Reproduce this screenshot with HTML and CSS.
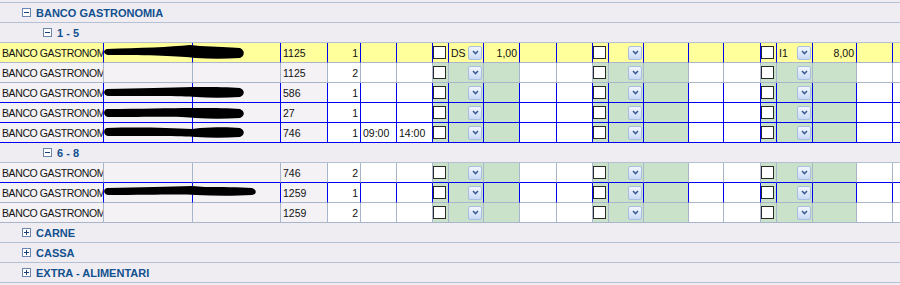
FILE: index.html
```html
<!DOCTYPE html>
<html lang="it">
<head>
    <meta charset="UTF-8">
    <title>Banco gastronomia</title>
    <link rel="stylesheet" href="styles.css">
</head>
<body>

<div class="grid">

    <div class="group lvl1">
        <svg class="tog" width="9" height="9" viewBox="0 0 9 9"><rect x="0.5" y="0.5" width="8" height="8"/><path d="M2 4.5h5"/></svg>
        <span>BANCO GASTRONOMIA</span>
    </div>
    <div class="group lvl2">
        <svg class="tog" width="9" height="9" viewBox="0 0 9 9"><rect x="0.5" y="0.5" width="8" height="8"/><path d="M2 4.5h5"/></svg>
        <span>1 - 5</span>
    </div>

    <!-- riga selezionata -->
    <div class="row current sel-v">
        <div class="c sh name">BANCO GASTRONOMIA</div>
        <div class="c sh"></div>
        <div class="c sh"></div>
        <div class="c sh">1125</div>
        <div class="c num">1</div>
        <div class="c"></div>
        <div class="c"></div>
        <div class="c g"><span class="chk"></span></div>
        <div class="c g sel"><span>DS</span><span class="dd"><svg width="7" height="5" viewBox="0 0 7 5"><path d="M1 1l2.5 2.5L6 1"/></svg></span></div>
        <div class="c g num">1,00</div>
        <div class="c"></div>
        <div class="c"></div>
        <div class="c g"><span class="chk"></span></div>
        <div class="c g sel"><span></span><span class="dd"><svg width="7" height="5" viewBox="0 0 7 5"><path d="M1 1l2.5 2.5L6 1"/></svg></span></div>
        <div class="c g"></div>
        <div class="c"></div>
        <div class="c"></div>
        <div class="c g"><span class="chk"></span></div>
        <div class="c g sel"><span>I1</span><span class="dd"><svg width="7" height="5" viewBox="0 0 7 5"><path d="M1 1l2.5 2.5L6 1"/></svg></span></div>
        <div class="c g num">8,00</div>
        <div class="c"></div>
        <div class="c"></div>
        <svg class="blot" width="300" height="19" viewBox="0 0 300 19"><path d="M107 6C140 5 170 4 190 2L200 3C215 4 230 4 240 5C245 7 245 13 240 15C225 16 210 16 196 15C180 13 150 12 108 12C103 11 103 7 107 6Z"/></svg>
    </div>

    <div class="row">
        <div class="c sh name">BANCO GASTRONOMIA</div>
        <div class="c sh"></div>
        <div class="c sh"></div>
        <div class="c sh">1125</div>
        <div class="c num">2</div>
        <div class="c"></div>
        <div class="c"></div>
        <div class="c g"><span class="chk"></span></div>
        <div class="c g sel"><span></span><span class="dd"><svg width="7" height="5" viewBox="0 0 7 5"><path d="M1 1l2.5 2.5L6 1"/></svg></span></div>
        <div class="c g"></div>
        <div class="c"></div>
        <div class="c"></div>
        <div class="c g"><span class="chk"></span></div>
        <div class="c g sel"><span></span><span class="dd"><svg width="7" height="5" viewBox="0 0 7 5"><path d="M1 1l2.5 2.5L6 1"/></svg></span></div>
        <div class="c g"></div>
        <div class="c"></div>
        <div class="c"></div>
        <div class="c g"><span class="chk"></span></div>
        <div class="c g sel"><span></span><span class="dd"><svg width="7" height="5" viewBox="0 0 7 5"><path d="M1 1l2.5 2.5L6 1"/></svg></span></div>
        <div class="c g"></div>
        <div class="c"></div>
        <div class="c"></div>
    </div>

    <div class="row sel-v sel-b">
        <div class="c sh name">BANCO GASTRONOMIA</div>
        <div class="c sh"></div>
        <div class="c sh"></div>
        <div class="c sh">586</div>
        <div class="c num">1</div>
        <div class="c"></div>
        <div class="c"></div>
        <div class="c g"><span class="chk"></span></div>
        <div class="c g sel"><span></span><span class="dd"><svg width="7" height="5" viewBox="0 0 7 5"><path d="M1 1l2.5 2.5L6 1"/></svg></span></div>
        <div class="c g"></div>
        <div class="c"></div>
        <div class="c"></div>
        <div class="c g"><span class="chk"></span></div>
        <div class="c g sel"><span></span><span class="dd"><svg width="7" height="5" viewBox="0 0 7 5"><path d="M1 1l2.5 2.5L6 1"/></svg></span></div>
        <div class="c g"></div>
        <div class="c"></div>
        <div class="c"></div>
        <div class="c g"><span class="chk"></span></div>
        <div class="c g sel"><span></span><span class="dd"><svg width="7" height="5" viewBox="0 0 7 5"><path d="M1 1l2.5 2.5L6 1"/></svg></span></div>
        <div class="c g"></div>
        <div class="c"></div>
        <div class="c"></div>
        <svg class="blot" width="300" height="19" viewBox="0 0 300 19"><path d="M107 6C140 5 170 5 192 4L200 4C215 4 230 4 240 5C245 7 245 12 240 14C225 15 210 15 196 14C180 13 150 13 108 13C103 12 103 7 107 6Z"/></svg>
    </div>

    <div class="row sel-v sel-b">
        <div class="c sh name">BANCO GASTRONOMIA</div>
        <div class="c sh"></div>
        <div class="c sh"></div>
        <div class="c sh">27</div>
        <div class="c num">1</div>
        <div class="c"></div>
        <div class="c"></div>
        <div class="c g"><span class="chk"></span></div>
        <div class="c g sel"><span></span><span class="dd"><svg width="7" height="5" viewBox="0 0 7 5"><path d="M1 1l2.5 2.5L6 1"/></svg></span></div>
        <div class="c g"></div>
        <div class="c"></div>
        <div class="c"></div>
        <div class="c g"><span class="chk"></span></div>
        <div class="c g sel"><span></span><span class="dd"><svg width="7" height="5" viewBox="0 0 7 5"><path d="M1 1l2.5 2.5L6 1"/></svg></span></div>
        <div class="c g"></div>
        <div class="c"></div>
        <div class="c"></div>
        <div class="c g"><span class="chk"></span></div>
        <div class="c g sel"><span></span><span class="dd"><svg width="7" height="5" viewBox="0 0 7 5"><path d="M1 1l2.5 2.5L6 1"/></svg></span></div>
        <div class="c g"></div>
        <div class="c"></div>
        <div class="c"></div>
        <svg class="blot" width="300" height="19" viewBox="0 0 300 19"><path d="M107 6C140 6 170 5 192 5L200 5C215 5 230 5 240 6C245 8 245 13 240 15C225 16 210 16 196 15C180 13 150 14 108 14C103 13 103 7 107 6Z"/></svg>
    </div>

    <div class="row sel-v sel-b">
        <div class="c sh name">BANCO GASTRONOMIA</div>
        <div class="c sh"></div>
        <div class="c sh"></div>
        <div class="c sh">746</div>
        <div class="c num">1</div>
        <div class="c">09:00</div>
        <div class="c">14:00</div>
        <div class="c g"><span class="chk"></span></div>
        <div class="c g sel"><span></span><span class="dd"><svg width="7" height="5" viewBox="0 0 7 5"><path d="M1 1l2.5 2.5L6 1"/></svg></span></div>
        <div class="c g"></div>
        <div class="c"></div>
        <div class="c"></div>
        <div class="c g"><span class="chk"></span></div>
        <div class="c g sel"><span></span><span class="dd"><svg width="7" height="5" viewBox="0 0 7 5"><path d="M1 1l2.5 2.5L6 1"/></svg></span></div>
        <div class="c g"></div>
        <div class="c"></div>
        <div class="c"></div>
        <div class="c g"><span class="chk"></span></div>
        <div class="c g sel"><span></span><span class="dd"><svg width="7" height="5" viewBox="0 0 7 5"><path d="M1 1l2.5 2.5L6 1"/></svg></span></div>
        <div class="c g"></div>
        <div class="c"></div>
        <div class="c"></div>
        <svg class="blot" width="300" height="19" viewBox="0 0 300 19"><path d="M107 5C140 4 170 5 192 6L200 5C215 4 230 4 240 5C245 7 245 12 240 14C225 15 210 15 196 14C180 13 150 13 108 13C103 12 103 6 107 5Z"/></svg>
    </div>

    <div class="group lvl2">
        <svg class="tog" width="9" height="9" viewBox="0 0 9 9"><rect x="0.5" y="0.5" width="8" height="8"/><path d="M2 4.5h5"/></svg>
        <span>6 - 8</span>
    </div>

    <div class="row sel-b">
        <div class="c sh name">BANCO GASTRONOMIA</div>
        <div class="c sh"></div>
        <div class="c sh"></div>
        <div class="c sh">746</div>
        <div class="c num">2</div>
        <div class="c"></div>
        <div class="c"></div>
        <div class="c g"><span class="chk"></span></div>
        <div class="c g sel"><span></span><span class="dd"><svg width="7" height="5" viewBox="0 0 7 5"><path d="M1 1l2.5 2.5L6 1"/></svg></span></div>
        <div class="c g"></div>
        <div class="c"></div>
        <div class="c"></div>
        <div class="c g"><span class="chk"></span></div>
        <div class="c g sel"><span></span><span class="dd"><svg width="7" height="5" viewBox="0 0 7 5"><path d="M1 1l2.5 2.5L6 1"/></svg></span></div>
        <div class="c g"></div>
        <div class="c"></div>
        <div class="c"></div>
        <div class="c g"><span class="chk"></span></div>
        <div class="c g sel"><span></span><span class="dd"><svg width="7" height="5" viewBox="0 0 7 5"><path d="M1 1l2.5 2.5L6 1"/></svg></span></div>
        <div class="c g"></div>
        <div class="c"></div>
        <div class="c"></div>
    </div>

    <div class="row sel-v">
        <div class="c sh name">BANCO GASTRONOMIA</div>
        <div class="c sh"></div>
        <div class="c sh"></div>
        <div class="c sh">1259</div>
        <div class="c num">1</div>
        <div class="c"></div>
        <div class="c"></div>
        <div class="c g"><span class="chk"></span></div>
        <div class="c g sel"><span></span><span class="dd"><svg width="7" height="5" viewBox="0 0 7 5"><path d="M1 1l2.5 2.5L6 1"/></svg></span></div>
        <div class="c g"></div>
        <div class="c"></div>
        <div class="c"></div>
        <div class="c g"><span class="chk"></span></div>
        <div class="c g sel"><span></span><span class="dd"><svg width="7" height="5" viewBox="0 0 7 5"><path d="M1 1l2.5 2.5L6 1"/></svg></span></div>
        <div class="c g"></div>
        <div class="c"></div>
        <div class="c"></div>
        <div class="c g"><span class="chk"></span></div>
        <div class="c g sel"><span></span><span class="dd"><svg width="7" height="5" viewBox="0 0 7 5"><path d="M1 1l2.5 2.5L6 1"/></svg></span></div>
        <div class="c g"></div>
        <div class="c"></div>
        <div class="c"></div>
        <svg class="blot" width="300" height="19" viewBox="0 0 300 19"><path d="M107 5C140 4 170 4 192 3L205 4C220 4 240 4 252 5C257 7 257 11 252 12C235 13 215 13 196 12C180 11 150 12 108 12C103 11 103 6 107 5Z"/></svg>
    </div>

    <div class="row">
        <div class="c sh name">BANCO GASTRONOMIA</div>
        <div class="c sh"></div>
        <div class="c sh"></div>
        <div class="c sh">1259</div>
        <div class="c num">2</div>
        <div class="c"></div>
        <div class="c"></div>
        <div class="c g"><span class="chk"></span></div>
        <div class="c g sel"><span></span><span class="dd"><svg width="7" height="5" viewBox="0 0 7 5"><path d="M1 1l2.5 2.5L6 1"/></svg></span></div>
        <div class="c g"></div>
        <div class="c"></div>
        <div class="c"></div>
        <div class="c g"><span class="chk"></span></div>
        <div class="c g sel"><span></span><span class="dd"><svg width="7" height="5" viewBox="0 0 7 5"><path d="M1 1l2.5 2.5L6 1"/></svg></span></div>
        <div class="c g"></div>
        <div class="c"></div>
        <div class="c"></div>
        <div class="c g"><span class="chk"></span></div>
        <div class="c g sel"><span></span><span class="dd"><svg width="7" height="5" viewBox="0 0 7 5"><path d="M1 1l2.5 2.5L6 1"/></svg></span></div>
        <div class="c g"></div>
        <div class="c"></div>
        <div class="c"></div>
    </div>

    <div class="group lvl1">
        <svg class="tog" width="9" height="9" viewBox="0 0 9 9"><rect x="0.5" y="0.5" width="8" height="8"/><path d="M2 4.5h5M4.5 2v5"/></svg>
        <span>CARNE</span>
    </div>
    <div class="group lvl1">
        <svg class="tog" width="9" height="9" viewBox="0 0 9 9"><rect x="0.5" y="0.5" width="8" height="8"/><path d="M2 4.5h5M4.5 2v5"/></svg>
        <span>CASSA</span>
    </div>
    <div class="group lvl1">
        <svg class="tog" width="9" height="9" viewBox="0 0 9 9"><rect x="0.5" y="0.5" width="8" height="8"/><path d="M2 4.5h5M4.5 2v5"/></svg>
        <span>EXTRA - ALIMENTARI</span>
    </div>

</div>

</body>
</html>
```

FILE: styles.css
```css
body {
    margin: 0;
    padding-top: 2px;
    width: 900px;
    height: 285px;
    overflow: hidden;
    background-color: #efedf1;
    font-family: "Liberation Sans", Arial, sans-serif;
    font-size: 10.5px;
    color: #111;
}
.grid {
    width: 953px;
    border-top: 1px solid #b4c0d4;
}

/* righe di gruppo */
.group {
    display: flex;
    align-items: center;
    gap: 5px;
    height: 19px;
    border-bottom: 1px solid #b4c0d4;
    font-size: 11px;
    font-weight: bold;
    color: #12508f;
}
.lvl1 {
    padding-left: 22px;
}
.lvl2 {
    padding-left: 43px;
}
.tog rect {
    fill: #fff;
    stroke: #6a86ae;
}
.tog path {
    stroke: #163f78;
    stroke-width: 1;
}

/* righe dati */
.row {
    position: relative;
    display: grid;
    grid-template-columns: 104px 89px 88px 47px 33px 36px 36px 16px 35px 36px 37px 36px 16px 35px 45px 35px 37px 16px 36px 44px 36px 60px;
    height: 20px;
}
.c {
    display: flex;
    align-items: center;
    height: 19px;
    padding: 0 2px;
    overflow: hidden;
    white-space: nowrap;
    background-color: #fff;
    border-right: 1px solid #a8b5cb;
    border-bottom: 1px solid #a8b5cb;
}
.c.sh {
    background-color: #f4f2f5;
}
.c.g {
    background-color: #cae2c9;
}
.c.num {
    justify-content: flex-end;
}
.c.name {
    letter-spacing: -0.4px;
}
.c.sel {
    justify-content: space-between;
    padding: 0 1px 0 2px;
}
.row.current .c {
    background-color: #ffff9c;
}
.row.sel-v .c {
    border-right-color: #0000f0;
}
.row.sel-b .c {
    border-bottom-color: #0000f0;
}

.chk {
    display: block;
    width: 11px;
    height: 11px;
    margin-left: -2px;
    border: 1px solid #2a2a2a;
    background: #fff;
}
.dd {
    display: flex;
    align-items: center;
    justify-content: center;
    width: 12px;
    height: 12px;
    border: 1px solid #a9bedf;
    border-radius: 2px;
    background: linear-gradient(#f2f6fd, #c9daf6);
}
.dd path {
    fill: none;
    stroke: #3b5d92;
    stroke-width: 1.6;
}

.blot {
    position: absolute;
    left: 0;
    top: 0;
    pointer-events: none;
}
.blot path {
    fill: #000;
}
```
